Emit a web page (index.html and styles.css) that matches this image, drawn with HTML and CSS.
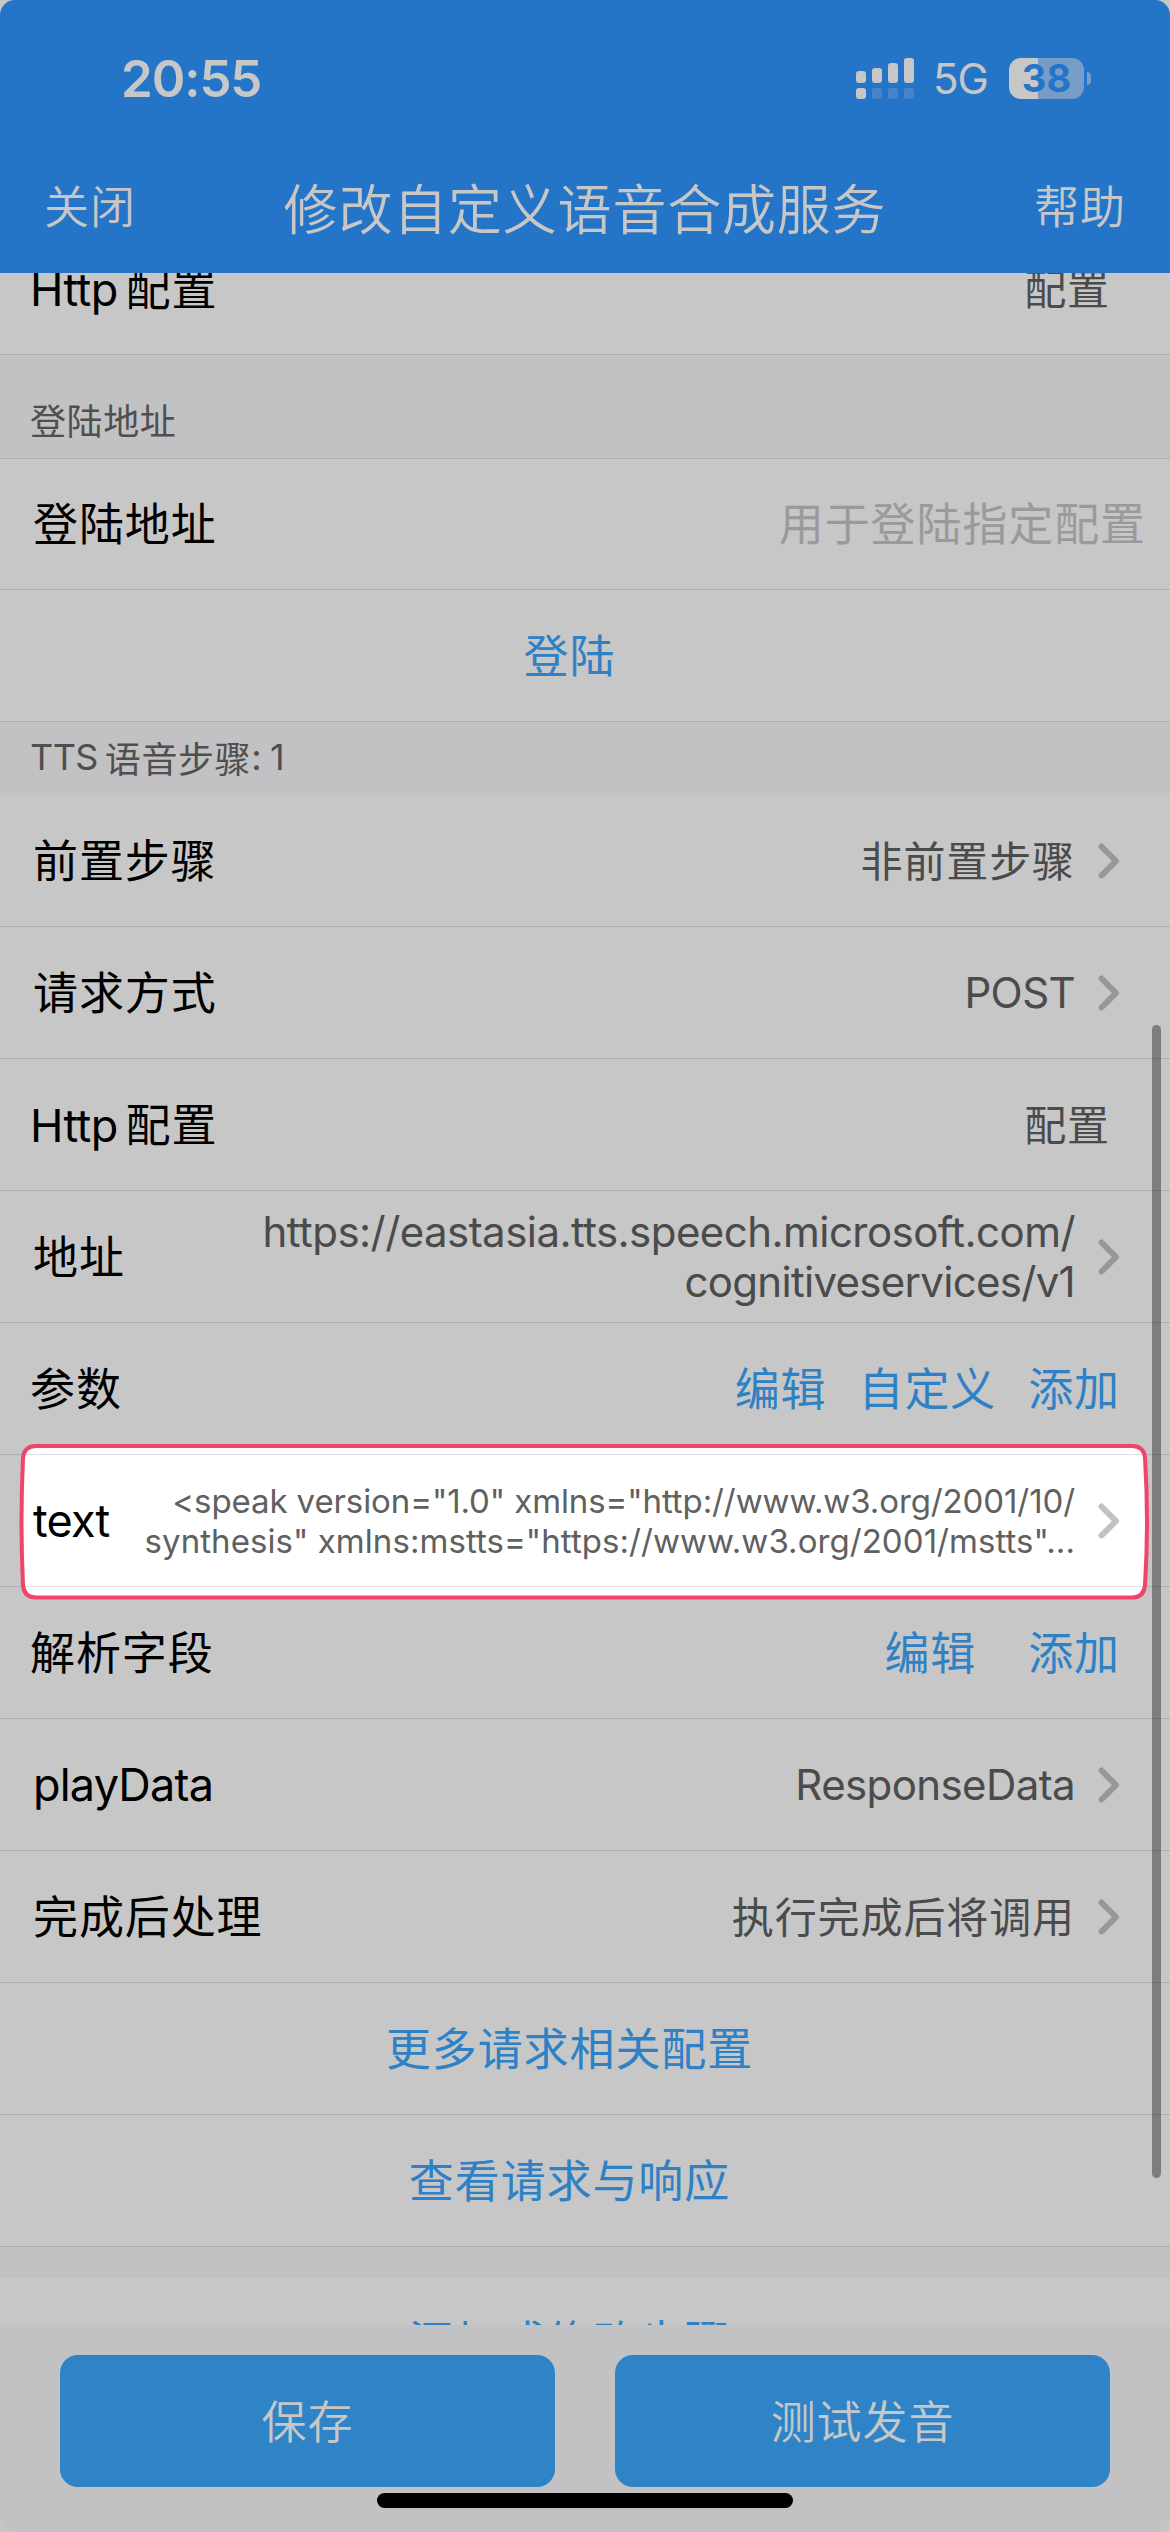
FILE: index.html
```html
<!DOCTYPE html>
<html lang="zh-CN">
<head>
<meta charset="utf-8">
<title>修改自定义语音合成服务</title>
<link rel="stylesheet" href="styles.css">
</head>
<body>
<svg class="defs" width="0" height="0">
  <symbol id="chevron" viewBox="0 0 22 36"><path d="M3.5 3.5 18 18 3.5 32.5" fill="none" stroke="#c2c2c5" stroke-width="6" stroke-linecap="round" stroke-linejoin="round"/></symbol>
</svg>
<div class="screen">
  <header class="header">
    <div class="status">
      <span class="time">20:55</span>
      <div class="indicators">
        <svg class="signal" width="58" height="41" viewBox="0 0 58 41" fill="#fff">
          <rect x="0" y="13" width="10" height="12" rx="3"/><rect x="16" y="10" width="10" height="15" rx="3"/><rect x="32" y="5" width="10" height="20" rx="3"/><rect x="48" y="0" width="10" height="25" rx="3"/>
          <rect x="0" y="30" width="10" height="11" rx="3"/>
          <g opacity=".2"><rect x="16" y="30" width="10" height="11" rx="3"/><rect x="32" y="30" width="10" height="11" rx="3"/><rect x="48" y="30" width="10" height="11" rx="3"/></g>
        </svg>
        <span class="network">5G</span>
        <span class="battery">38</span>
        <span class="battery-tip"></span>
      </div>
    </div>
    <nav class="nav">
      <span class="nav-btn">关闭</span>
      <h1 class="title">修改自定义语音合成服务</h1>
      <span class="nav-btn">帮助</span>
    </nav>
  </header>

  <main class="list">
    <div class="row row-scrolled flush"><span class="label"><span class="latin">Http</span>配置</span><span class="value plain">配置</span></div>
    <div class="section section-tall">登陆地址</div>
    <div class="row row-first"><span class="label">登陆地址</span><span class="placeholder">用于登陆指定配置</span></div>
    <div class="row action">登陆</div>
    <div class="section"><span class="tts">TTS</span>语音步骤<span class="count">: 1</span></div>
    <div class="row"><span class="label">前置步骤</span><span class="value">非前置步骤</span><svg class="chevron"><use href="#chevron"/></svg></div>
    <div class="row"><span class="label">请求方式</span><span class="value latin-value post">POST</span><svg class="chevron"><use href="#chevron"/></svg></div>
    <div class="row flush"><span class="label"><span class="latin">Http</span>配置</span><span class="value plain">配置</span></div>
    <div class="row"><span class="label">地址</span><span class="value latin-value url">https://eastasia.tts.speech.microsoft.com/<br><span class="url-2">cognitiveservices/v1</span></span><svg class="chevron"><use href="#chevron"/></svg></div>
    <div class="row flush"><span class="label">参数</span><div class="links"><span>编辑</span><span>自定义</span><span>添加</span></div></div>
    <div class="row"><span class="label word">text</span><span class="value latin-value ssml"><span class="ssml-1">&lt;speak version="1.0" xmlns="http://www.w3.org/2001/10/</span><br><span class="ssml-2">synthesis" xmlns:mstts="https://www.w3.org/2001/mstts"...</span></span><svg class="chevron"><use href="#chevron"/></svg></div>
    <div class="row flush"><span class="label">解析字段</span><div class="links wide"><span>编辑</span><span>添加</span></div></div>
    <div class="row"><span class="label word">playData</span><span class="value latin-value resp">ResponseData</span><svg class="chevron"><use href="#chevron"/></svg></div>
    <div class="row"><span class="label">完成后处理</span><span class="value">执行完成后将调用</span><svg class="chevron"><use href="#chevron"/></svg></div>
    <div class="row action">更多请求相关配置</div>
    <div class="row action">查看请求与响应</div>
    <div class="section section-gap"></div>
    <div class="row action action-last">添加或修改步骤</div>
    <div class="scroll-thumb"></div>
  </main>

  <footer class="footer">
    <button class="btn">保存</button>
    <button class="btn">测试发音</button>
  </footer>
</div>
<!-- dimmed backdrop with a spotlight around the text parameter -->
<svg class="spotlight" width="1170" height="2532" viewBox="0 0 1170 2532">
  <path fill="#000" fill-opacity=".22" fill-rule="evenodd" d="M0 0H1170V2532H0ZM36 1446H1132Q1144 1446 1145 1458Q1149 1522 1145 1585Q1144 1597.500 1132 1597.500H36Q24 1597.500 23 1585Q20 1522 23 1458Q24 1446 36 1446Z"/>
  <path fill="none" stroke="#f04468" stroke-width="4" d="M36 1446H1132Q1144 1446 1145 1458Q1149 1522 1145 1585Q1144 1597.500 1132 1597.500H36Q24 1597.500 23 1585Q20 1522 23 1458Q24 1446 36 1446Z"/>
</svg>
<div class="home-indicator"></div>
</body>
</html>
```
FILE: styles.css
```css
* { box-sizing: border-box; }
body {
  margin: 0;
  width: 1170px;
  height: 2532px;
  position: relative;
  overflow: hidden;
  background: #fff;
  font-family: Inter, "Noto Sans CJK SC", sans-serif;
  font-size: 45px;
  letter-spacing: 0.9px;
  color: #000;
}
.defs { display: none; }
.screen {
  width: 1170px;
  height: 2532px;
  display: flex;
  flex-direction: column;
  overflow: hidden;
  border-radius: 15px;
  background: #f9f9fb;
}

.header {
  height: 273px;
  flex: none;
  background: #2f96ff;
  color: #fff;
}
.status {
  height: 156px;
  padding: 0 79px 0 121px;
  display: flex;
  justify-content: space-between;
  align-items: center;
}
.time { font-size: 51px; font-weight: 600; letter-spacing: -1.1px; }
.indicators { display: flex; align-items: center; }
.network { margin-left: 19px; width: 58px; font-size: 42px; letter-spacing: -1px; font-weight: 400; line-height: 41px; }
.battery {
  margin-left: 18px;
  width: 75px;
  height: 41px;
  border-radius: 12px;
  background: linear-gradient(90deg, #fff 29px, rgba(255,255,255,.5) 29px);
  color: #2f96ff;
  font-size: 38px;
  font-weight: 700;
  line-height: 41px;
  letter-spacing: 0;
  text-align: center;
}
.battery-tip { margin-left: 3px; width: 4px; height: 13px; border-radius: 0 5px 5px 0; background: rgba(255,255,255,.5); }
.nav {
  height: 104px;
  padding: 0 44px 4px 44px;
  display: flex;
  align-items: center;
  justify-content: space-between;
  font-weight: 350;
}
.nav-btn { padding-bottom: 4px; }
.title { margin: 0; font-size: 54px; font-weight: 350; letter-spacing: 0.8px; }

.list {
  flex: 1;
  min-height: 0;
  overflow: hidden;
  position: relative;
}
.row {
  height: 132px;
  padding: 0 50px 0 33px;
  display: flex;
  align-items: center;
  background: #fff;
  border-bottom: 1px solid #e0e0e3;
}
.row-scrolled { margin-top: -50px; }
.row-first { height: 131px; padding-right: 24px; }
.flush { padding-left: 30px; }
.label, .value, .links, .placeholder { padding-bottom: 5px; }
.label { flex: none; }
.latin { letter-spacing: -0.6px; margin-right: 8px; }
.word { letter-spacing: -0.8px; padding-bottom: 0; }
.value {
  margin-left: auto;
  font-size: 42px;
  color: #606060;
  text-align: right;
}
.plain { margin-right: 10px; }
.placeholder { margin-left: auto; color: #c6c6c8; }
.chevron { width: 22px; height: 36px; margin-left: 23px; flex: none; }
.latin-value { letter-spacing: 0; padding-bottom: 0; }
.post { letter-spacing: -0.6px; }
.resp { letter-spacing: -0.6px; }
.url { line-height: 50px; letter-spacing: -0.55px; }
.url-2 { letter-spacing: -0.7px; }
.ssml { font-size: 33px; line-height: 40px; white-space: nowrap; }
.ssml-1 { letter-spacing: -0.1px; }
.ssml-2 { letter-spacing: 0.06px; }
.links { margin-left: auto; display: flex; gap: 32px; color: #3ba6fb; }
.wide { gap: 52px; }
.action { padding: 0 31px 5px 0; justify-content: center; color: #3ba6fb; }
.action-last { padding-bottom: 8px; }
.section {
  height: 73px;
  padding: 0 30px 4px;
  display: flex;
  align-items: center;
  font-size: 36px;
  letter-spacing: 0.6px;
  color: #666;
  background: #f9f9fb;
}
.section-tall { height: 104px; padding-top: 28px; border-bottom: 1px solid #e0e0e3; }
.section-gap { height: 31px; }
.tts { letter-spacing: -0.6px; margin-right: 7px; }
.count { white-space: pre; letter-spacing: -0.9px; }
.scroll-thumb {
  position: absolute;
  top: 752px;
  right: 9px;
  width: 9px;
  height: 1153px;
  border-radius: 5px;
  background: rgba(0,0,0,.37);
}

.footer {
  flex: none;
  height: 207px;
  padding: 30px 60px 45px;
  display: grid;
  grid-template-columns: 1fr 1fr;
  gap: 60px;
}
.btn {
  height: 132px;
  border: 0;
  padding: 0 0 4px;
  border-radius: 18px;
  background: #3baaff;
  color: #fff;
  font: inherit;
  font-weight: 350;
  letter-spacing: 0.9px;
}

.spotlight { position: absolute; left: 0; top: 0; pointer-events: none; }
.home-indicator {
  position: absolute;
  left: 377px;
  bottom: 24px;
  width: 416px;
  height: 15px;
  border-radius: 8px;
  background: #000;
}
```
